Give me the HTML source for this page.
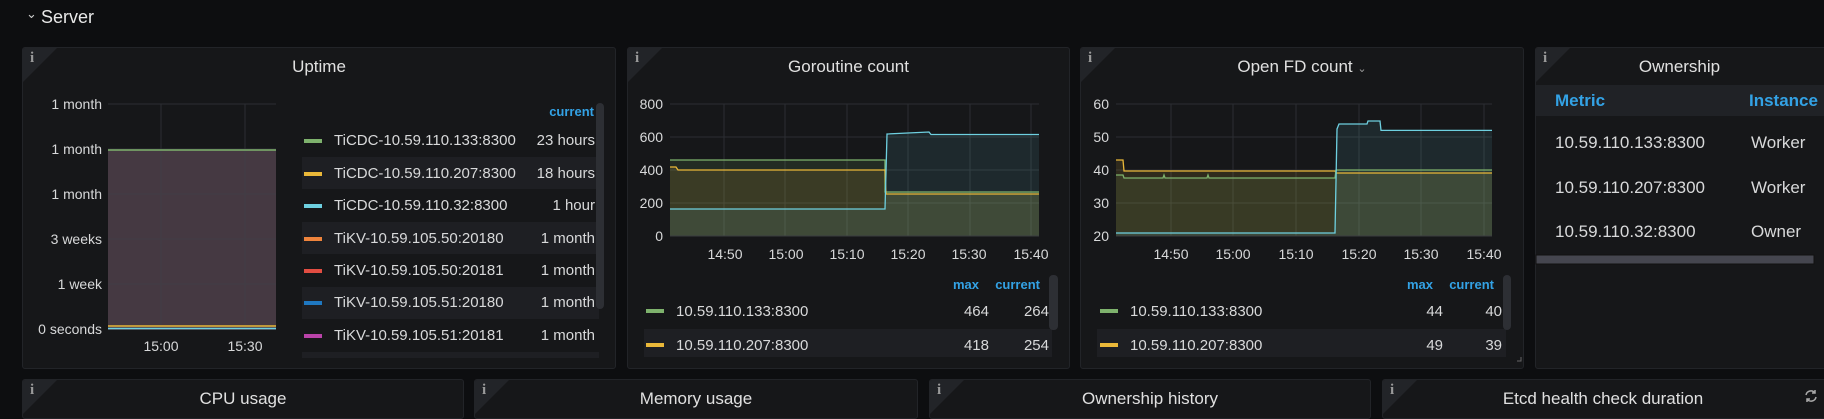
<!DOCTYPE html>
<html><head><meta charset="utf-8"><style>
*{margin:0;padding:0;box-sizing:border-box}
body{width:1824px;height:405px;background:#0d0e10;font-family:"Liberation Sans",sans-serif;color:#d8d9da;overflow:hidden;position:relative}
.p{position:absolute;background:#161719;border:1px solid #222428;border-radius:3px;overflow:hidden}
.c{position:absolute;left:0;top:0;width:0;height:0;border-top:34px solid #222428;border-right:34px solid transparent}
.i{position:absolute;left:7px;top:2px;font:bold 15px "Liberation Serif",serif;color:#9a9a9a}
.t{position:absolute;top:9px;left:0;right:0;text-align:center;font-size:17px;color:#e0e0e0}
.a{position:absolute;white-space:nowrap}
</style></head><body>
<div class="a" style="left:26px;top:6px;font-size:13px;color:#ccc">&#8964;</div>
<div class="a" style="left:41px;top:7px;font-size:18px;color:#e8e8e8">Server</div>

<!-- Uptime -->
<div class="p" style="left:22px;top:47px;width:594px;height:322px"><div class="c"></div><div class="i">i</div><div class="t">Uptime</div></div>
<svg class="a" style="left:0;top:0" width="1824" height="405" font-family="Liberation Sans" font-size="14" fill="#d8d9da">
<g stroke="#2c2e33" stroke-width="1">
<line x1="108" y1="104" x2="276" y2="104"/><line x1="108" y1="149" x2="276" y2="149"/><line x1="108" y1="194" x2="276" y2="194"/><line x1="108" y1="239" x2="276" y2="239"/><line x1="108" y1="284" x2="276" y2="284"/>
<line x1="161" y1="104" x2="161" y2="330"/><line x1="245" y1="104" x2="245" y2="330"/>
</g>
<rect x="108" y="150" width="168" height="180" fill="#4a3d47" opacity=".9"/>
<g stroke="#3e3f45" opacity=".6"><line x1="108" y1="194" x2="276" y2="194"/><line x1="108" y1="239" x2="276" y2="239"/><line x1="108" y1="284" x2="276" y2="284"/><line x1="161" y1="150" x2="161" y2="330"/><line x1="245" y1="150" x2="245" y2="330"/></g>
<line x1="108" y1="150" x2="276" y2="150" stroke="#7eb26d" stroke-width="1.5"/>
<line x1="108" y1="326" x2="276" y2="326" stroke="#eab839" stroke-width="1.5"/>
<line x1="108" y1="328.5" x2="276" y2="328.5" stroke="#6ed0e0" stroke-width="1.5"/>
<g text-anchor="end"><text x="102" y="109">1 month</text><text x="102" y="154">1 month</text><text x="102" y="199">1 month</text><text x="102" y="244">3 weeks</text><text x="102" y="289">1 week</text><text x="102" y="334">0 seconds</text></g>
<g text-anchor="middle"><text x="161" y="351">15:00</text><text x="245" y="351">15:30</text></g>
<g fill="#1e1f23"><rect x="302" y="157" width="297" height="32"/><rect x="302" y="222" width="297" height="32"/><rect x="302" y="287" width="297" height="32"/><rect x="302" y="352" width="297" height="6"/></g>
<rect x="596" y="103" width="8" height="206" rx="4" fill="#2d2f34"/>
<text x="594" y="116" text-anchor="end" fill="#33a2e5" font-weight="bold" font-size="13">current</text>
<g font-size="15">
<rect x="304" y="139" width="18" height="4" fill="#7eb26d"/><text x="334" y="145">TiCDC-10.59.110.133:8300</text><text x="595" y="145" text-anchor="end">23 hours</text>
<rect x="304" y="172" width="18" height="4" fill="#eab839"/><text x="334" y="178">TiCDC-10.59.110.207:8300</text><text x="595" y="178" text-anchor="end">18 hours</text>
<rect x="304" y="204" width="18" height="4" fill="#6ed0e0"/><text x="334" y="210">TiCDC-10.59.110.32:8300</text><text x="595" y="210" text-anchor="end">1 hour</text>
<rect x="304" y="237" width="18" height="4" fill="#ef843c"/><text x="334" y="243">TiKV-10.59.105.50:20180</text><text x="595" y="243" text-anchor="end">1 month</text>
<rect x="304" y="269" width="18" height="4" fill="#e24d42"/><text x="334" y="275">TiKV-10.59.105.50:20181</text><text x="595" y="275" text-anchor="end">1 month</text>
<rect x="304" y="301" width="18" height="4" fill="#1f78c1"/><text x="334" y="307">TiKV-10.59.105.51:20180</text><text x="595" y="307" text-anchor="end">1 month</text>
<rect x="304" y="334" width="18" height="4" fill="#ba43a9"/><text x="334" y="340">TiKV-10.59.105.51:20181</text><text x="595" y="340" text-anchor="end">1 month</text>
</g>
</svg>

<!-- Goroutine -->
<div class="p" style="left:627px;top:47px;width:443px;height:322px"><div class="c"></div><div class="i">i</div><div class="t">Goroutine count</div></div>
<!-- Open FD -->
<div class="p" style="left:1080px;top:47px;width:444px;height:322px"><div class="c"></div><div class="i">i</div><div class="t">Open FD count <span style="font-size:11px;color:#999">&#8964;</span></div></div>
<!-- Ownership -->
<div class="p" style="left:1535px;top:47px;width:300px;height:322px"><div class="c"></div><div class="i">i</div><div class="t" style="right:11px">Ownership</div></div>

<svg class="a" style="left:0;top:0" width="1824" height="405" font-family="Liberation Sans" font-size="14" fill="#d8d9da">
<g stroke="#2c2e33"><line x1="670" y1="104" x2="1039" y2="104"/><line x1="670" y1="137" x2="1039" y2="137"/><line x1="670" y1="170" x2="1039" y2="170"/><line x1="670" y1="203" x2="1039" y2="203"/>
<line x1="724" y1="104" x2="724" y2="236"/><line x1="785" y1="104" x2="785" y2="236"/><line x1="847" y1="104" x2="847" y2="236"/><line x1="908" y1="104" x2="908" y2="236"/><line x1="970" y1="104" x2="970" y2="236"/><line x1="1031" y1="104" x2="1031" y2="236"/></g>
<polygon points="670,160 885,160 885,192 1039,192 1039,236 670,236" fill="#7eb26d" opacity=".13"/>
<polygon points="670,167 676,167 678,170 885,170 885,194 1039,194 1039,236 670,236" fill="#eab839" opacity=".12"/>
<polygon points="670,209 885,209 887,134 929,132 931,134.5 1039,134.5 1039,236 670,236" fill="#6ed0e0" opacity=".1"/>
<polyline points="670,160 885,160 885,192 1039,192" fill="none" stroke="#7eb26d" stroke-width="1.3"/>
<polyline points="670,167 676,167 678,170 885,170 886,194 1039,194" fill="none" stroke="#eab839" stroke-width="1.3"/>
<polyline points="670,209 885,209 887,134 929,132 931,134.5 1039,134.5" fill="none" stroke="#6ed0e0" stroke-width="1.3"/>
<line x1="670" y1="236" x2="1039" y2="236" stroke="#3a3c40"/>
<g text-anchor="end"><text x="663" y="109">800</text><text x="663" y="142">600</text><text x="663" y="175">400</text><text x="663" y="208">200</text><text x="663" y="241">0</text></g>
<g text-anchor="middle"><text x="725" y="259">14:50</text><text x="786" y="259">15:00</text><text x="847" y="259">15:10</text><text x="908" y="259">15:20</text><text x="969" y="259">15:30</text><text x="1031" y="259">15:40</text></g>
<rect x="644" y="329" width="408" height="28" fill="#1e1f23"/>
<rect x="1049" y="275" width="9" height="55" rx="4" fill="#2d2f34"/>
<g font-weight="bold" font-size="13" fill="#33a2e5" text-anchor="end"><text x="979" y="289">max</text><text x="1040" y="289">current</text></g>
<g font-size="15"><rect x="646" y="309" width="18" height="4" fill="#7eb26d"/><text x="676" y="316">10.59.110.133:8300</text><text x="989" y="316" text-anchor="end">464</text><text x="1049" y="316" text-anchor="end">264</text>
<rect x="646" y="343" width="18" height="4" fill="#eab839"/><text x="676" y="350">10.59.110.207:8300</text><text x="989" y="350" text-anchor="end">418</text><text x="1049" y="350" text-anchor="end">254</text></g>

<g stroke="#2c2e33"><line x1="1116" y1="104" x2="1492" y2="104"/><line x1="1116" y1="137" x2="1492" y2="137"/><line x1="1116" y1="170" x2="1492" y2="170"/><line x1="1116" y1="203" x2="1492" y2="203"/>
<line x1="1171" y1="104" x2="1171" y2="236"/><line x1="1233" y1="104" x2="1233" y2="236"/><line x1="1296" y1="104" x2="1296" y2="236"/><line x1="1359" y1="104" x2="1359" y2="236"/><line x1="1421" y1="104" x2="1421" y2="236"/><line x1="1484" y1="104" x2="1484" y2="236"/></g>
<polygon points="1116,160 1123,160 1124,171 1335,171 1336,173 1492,173 1492,236 1116,236" fill="#eab839" opacity=".12"/>
<polygon points="1116,175 1123,175 1124,178 1335,178 1336,170 1492,170 1492,236 1116,236" fill="#7eb26d" opacity=".12"/>
<polygon points="1116,233 1335,233 1337,129 1339,124 1367,124 1368,121 1380,121 1381,130.4 1492,130.4 1492,236 1116,236" fill="#6ed0e0" opacity=".1"/>
<polyline points="1116,160 1123,160 1124,171 1335,171 1336,173 1492,173" fill="none" stroke="#eab839" stroke-width="1.3"/>
<polyline points="1116,175 1123,175 1124,178 1163,178 1164,175 1165,178 1207,178 1208,175 1209,178 1335,178 1336,170 1492,170" fill="none" stroke="#7eb26d" stroke-width="1.3"/>
<polyline points="1116,233 1335,233 1337,129 1339,124 1367,124 1368,121 1380,121 1381,130.4 1492,130.4" fill="none" stroke="#6ed0e0" stroke-width="1.3"/>
<line x1="1116" y1="236" x2="1492" y2="236" stroke="#3a3c40"/>
<g text-anchor="end"><text x="1109" y="109">60</text><text x="1109" y="142">50</text><text x="1109" y="175">40</text><text x="1109" y="208">30</text><text x="1109" y="241">20</text></g>
<g text-anchor="middle"><text x="1171" y="259">14:50</text><text x="1233" y="259">15:00</text><text x="1296" y="259">15:10</text><text x="1359" y="259">15:20</text><text x="1421" y="259">15:30</text><text x="1484" y="259">15:40</text></g>
<rect x="1097" y="329" width="409" height="28" fill="#1e1f23"/>
<rect x="1503" y="275" width="8" height="55" rx="4" fill="#2d2f34"/>
<g font-weight="bold" font-size="13" fill="#33a2e5" text-anchor="end"><text x="1433" y="289">max</text><text x="1494" y="289">current</text></g>
<g font-size="15"><rect x="1100" y="309" width="18" height="4" fill="#7eb26d"/><text x="1130" y="316">10.59.110.133:8300</text><text x="1443" y="316" text-anchor="end">44</text><text x="1502" y="316" text-anchor="end">40</text>
<rect x="1100" y="343" width="18" height="4" fill="#eab839"/><text x="1130" y="350">10.59.110.207:8300</text><text x="1443" y="350" text-anchor="end">49</text><text x="1502" y="350" text-anchor="end">39</text></g>
<path d="M1517 361h4v-4" fill="none" stroke="#666" stroke-width="1"/>

<rect x="1536" y="85" width="288" height="31" fill="#202226"/>
<g font-weight="bold" font-size="17" fill="#33a2e5"><text x="1555" y="106">Metric</text><text x="1749" y="106">Instance</text></g>
<g font-size="17"><text x="1555" y="148">10.59.110.133:8300</text><text x="1751" y="148">Worker</text>
<text x="1555" y="193">10.59.110.207:8300</text><text x="1751" y="193">Worker</text>
<text x="1555" y="237">10.59.110.32:8300</text><text x="1751" y="237">Owner</text></g>
<rect x="1536" y="255" width="278" height="9" fill="#45464f" stroke="#111" stroke-width="1"/>
</svg>

<div class="p" style="left:22px;top:379px;width:442px;height:40px"><div class="c"></div><div class="i">i</div><div class="t" style="top:9px">CPU usage</div></div>
<div class="p" style="left:474px;top:379px;width:444px;height:40px"><div class="c"></div><div class="i">i</div><div class="t" style="top:9px">Memory usage</div></div>
<div class="p" style="left:929px;top:379px;width:442px;height:40px"><div class="c"></div><div class="i">i</div><div class="t" style="top:9px">Ownership history</div></div>
<div class="p" style="left:1382px;top:379px;width:460px;height:40px"><div class="c"></div><div class="i">i</div><div class="t" style="top:9px;right:18px">Etcd health check duration</div>
<svg class="a" style="left:420px;top:8px" width="16" height="16" fill="none" stroke="#aaa" stroke-width="1.5"><path d="M3 7a5 5 0 0 1 9-2M13 9a5 5 0 0 1-9 2"/><path d="M12 2v3h-3M4 14v-3h3"/></svg></div>
</body></html>
